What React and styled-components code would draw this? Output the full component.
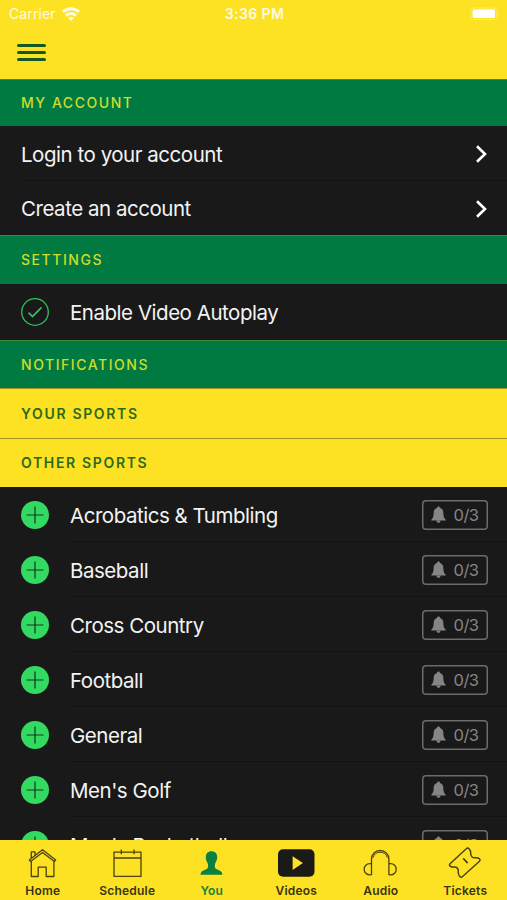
import React, { useState } from 'react';
import styled, { createGlobalStyle } from 'styled-components';

const GlobalStyle = createGlobalStyle`
	* {
		box-sizing: border-box;
	}
	body {
		margin: 0;
		background-color: #191919;
		font-family: Inter, 'Liberation Sans', sans-serif;
	}
	button {
		font: inherit;
		background: none;
		border: 0;
		padding: 0;
		cursor: pointer;
	}
`;

const Screen = styled.div`
	display: flex;
	flex-direction: column;
	width: 100%;
	height: 100vh;
	overflow: hidden;
	background-color: #191919;
`;

//Status bar and menu button
const Header = styled.header`
	flex: none;
	height: 79px;
	background-color: #fde224;
`;
const StatusBar = styled.div`
	display: grid;
	grid-template-columns: 1fr auto 1fr;
	align-items: center;
	height: 27px;
	padding: 0 7px 0 9px;
	color: #fffbe0;
	font-size: 14px;
`;
const Carrier = styled.div`
	display: flex;
	align-items: center;
	gap: 6px;
	letter-spacing: 0.1px;
`;
const Clock = styled.div`
	font-weight: 600;
	letter-spacing: 0.4px;
`;
const Battery = styled.svg`
	justify-self: end;
`;
const MenuButton = styled.button`
	display: flex;
	flex-direction: column;
	gap: 4.2px;
	margin: 17px 0 0 17px;
`;
const MenuLine = styled.span`
	width: 29px;
	height: 3px;
	border-radius: 1.5px;
	background-color: #14591f;
`;

//Scrolling list
const Content = styled.main`
	flex: 1;
	min-height: 0;
	overflow: hidden;
`;
const SectionTitle = styled.h2`
	display: flex;
	align-items: center;
	height: ${({ $height }) => $height}px;
	margin: 0;
	padding: 0 21px 1px;
	border-top: 1px solid ${({ $light }) => ($light ? '#a3941c' : '#3f8a35')};
	background-color: ${({ $light }) => ($light ? '#fde224' : '#007a40')};
	color: ${({ $light }) => ($light ? '#2b6a1c' : '#cfdc2c')};
	font-size: 14px;
	font-weight: ${({ $light }) => ($light ? 600 : 500)};
	letter-spacing: ${({ $light }) => ($light ? 1.65 : 1.55)}px;
`;
const Row = styled.div`
	display: flex;
	align-items: center;
	height: ${({ $height }) => $height || 55}px;
	padding-left: 21px;
`;
const RowBody = styled.div`
	display: flex;
	flex: 1;
	align-items: center;
	justify-content: space-between;
	height: 100%;
	padding: 2px 19px 0 0;
	border-bottom: 1px solid ${({ $last }) => ($last ? 'transparent' : '#131313')};
`;
const RowLabel = styled.span`
	color: #f3f3f3;
	font-size: 20.5px;
	letter-spacing: -0.47px;
	white-space: nowrap;
`;
const RowIcon = styled.svg`
	flex: none;
	width: 28px;
	height: 28px;
	margin-right: 21px;
`;
const AlertBadge = styled.button`
	display: flex;
	align-items: center;
	justify-content: center;
	gap: 7px;
	width: 66px;
	height: 30px;
	border-radius: 4px;
	box-shadow: inset 0 0 0 1.5px #6c6c6c;
	color: #858585;
	font-size: 16.5px;
	letter-spacing: -0.5px;
`;

//Bottom tabs
const TabBar = styled.nav`
	display: grid;
	flex: none;
	grid-template-columns: repeat(6, 1fr);
	height: 60px;
	background-color: #fde224;
`;
const Tab = styled.button`
	display: flex;
	flex-direction: column;
	align-items: center;
	padding: 7px 0 0 1px;
	color: ${({ $active }) => ($active ? '#14803a' : '#3a3410')};
	font-size: 12px;
	font-weight: 600;
	line-height: 15px;
	letter-spacing: 0.2px;

	svg {
		flex: none;
		width: 36px;
		height: 32px;
		margin: 0 1px 4px 0;
		overflow: visible;
		fill: none;
		stroke: #4b430f;
		stroke-width: 1.3;
		stroke-linejoin: round;
	}
`;

const Chevron = () => (
	<svg width="14" height="20" viewBox="0 0 14 20" fill="none" stroke="#fff" strokeWidth="2.6">
		<path d="M3 2.2l8 7.8-8 7.8" />
	</svg>
);

const Bell = () => (
	<svg width="15" height="18" viewBox="0 0 15 18" fill="#858585">
		<path d="M7.500 .6c.9 0 1.400.6 1.500 1.300 2.200.6 3.300 2.300 3.300 4.600 0 4 .7 5.600 2.400 7.200v.9H.300v-.9c1.700-1.600 2.400-3.200 2.400-7.200 0-2.300 1.100-4 3.300-4.600.1-.7.6-1.300 1.500-1.300z" />
		<path d="M5.400 14.500h4.200c-.2 1.500-1 2.300-2.100 2.300s-1.900-.8-2.100-2.300z" />
	</svg>
);

const HomeIcon = () => (
	<svg viewBox="0 0 36 32">
		<path d="M5.300 12.900L18.500 2.700l13.200 10.200-1.300 1.700L18.500 5.400 6.600 14.600z" />
		<path d="M7.300 14.500v15h6.900v-9.300h8v9.300h7.700v-15" />
		<path d="M7.300 11V4.900h3.700v3.400" />
	</svg>
);

const ScheduleIcon = () => (
	<svg viewBox="0 0 36 32">
		<path d="M5 5.100h27v24.300H5zM5 11h27M12.300 2.600v4.600M25 2.600v4.600" />
	</svg>
);

const YouIcon = () => (
	<svg viewBox="0 0 36 32">
		<path
			fill="#0b8040"
			stroke="none"
			d="M18.500 4.200c3.700 0 5.700 2.300 5.700 5.700 0 1.700-.3 2.900-.9 4.200-.6 1.500-1.300 2.600-1.500 4.300-.2 2.300.6 3.300 2.500 4 3.300 1.200 5 2.200 5.100 5.300H7.500c.1-3.100 1.800-4.100 5.100-5.300 1.900-.7 2.700-1.700 2.500-4-.2-1.700-.9-2.800-1.500-4.300-.6-1.300-.8-2.500-.8-4.200 0-3.400 2-5.700 5.700-5.700z"
		/>
	</svg>
);

const VideosIcon = () => (
	<svg viewBox="0 0 36 32">
		<rect x="0" y="2.300" width="36.500" height="27.400" rx="5" fill="#1a1a16" stroke="none" />
		<path d="M14.600 9.200v13.800l10.300-6.900z" fill="#fde224" stroke="none" />
	</svg>
);

const AudioIcon = () => (
	<svg viewBox="0 0 36 32">
		<path d="M9.500 27.900V12.200a8.700 8.700 0 0 1 17.400 0v15.700" />
		<path d="M11.100 10.600a7.400 7.400 0 0 1 14.200 0" strokeWidth="1" />
		<path d="M9.500 16.600H7.800a5.600 5.600 0 0 0 0 11.300h1.700M26.900 16.600h1.700a5.600 5.600 0 0 1 0 11.300h-1.700" />
	</svg>
);

const TicketsIcon = () => (
	<svg viewBox="0 0 36 32">
		<path
			strokeWidth="1.5"
			d="M19.300 1.800L3 16.700c-.8.8-.8 1.500-.1 2.200 1.200 1.200 2.200 1.400 3.800 1.200 3-.4 5 1.600 4.600 4.600-.2 1.800 0 3.200 1.300 4.600.9 1 1.700 1.500 2.700.5L32.500 14.200c.8-.8.8-1.500.1-2.200-1-1-2.200-1.400-4-1.200-3 .4-5.200-1.700-4.900-4.600.2-1.800-.2-2.900-1.500-4.300-1-1.100-1.900-1.100-2.900-.1z"
		/>
		<path d="M16.200 11.400l4.500 4.700" strokeWidth="1.700" />
	</svg>
);

const accountLinks = ['Login to your account', 'Create an account'];

const sports = [
	'Acrobatics & Tumbling',
	'Baseball',
	'Cross Country',
	'Football',
	'General',
	"Men's Golf",
	"Men's Basketball",
];

const tabs = [
	{ name: 'Home', Icon: HomeIcon },
	{ name: 'Schedule', Icon: ScheduleIcon },
	{ name: 'You', Icon: YouIcon },
	{ name: 'Videos', Icon: VideosIcon },
	{ name: 'Audio', Icon: AudioIcon },
	{ name: 'Tickets', Icon: TicketsIcon },
];

const App = () => {
	const [activeTab, setActiveTab] = useState('You');
	return (
		<Screen>
			<GlobalStyle />
			<Header>
				<StatusBar>
					<Carrier>
						Carrier
						<svg width="18" height="14" viewBox="0 0 18 14" fill="none" stroke="#fffbe0" strokeWidth="2.900">
							<path d="M.900 5a11.600 11.600 0 0 1 16.200 0M4 8.600a7.100 7.100 0 0 1 10 0" />
							<path d="M9 13.900l-2.800-3a3.900 3.900 0 0 1 5.600 0z" fill="#fffbe0" stroke="none" />
						</svg>
					</Carrier>
					<Clock>3:36 PM</Clock>
					<Battery width="30" height="14" viewBox="0 0 30 14">
						<rect x="0.800" y="1" width="26" height="11.500" rx="3" fill="none" stroke="#ffed5e" />
						<rect x="2.600" y="2.600" width="22.400" height="8.400" rx="1.500" fill="#fff" />
						<path d="M28.200 5v3.600c1.300-.6 1.300-3 0-3.600z" fill="#ffed5e" />
					</Battery>
				</StatusBar>
				<MenuButton aria-label="Menu">
					<MenuLine />
					<MenuLine />
					<MenuLine />
				</MenuButton>
			</Header>

			<Content>
				<SectionTitle $height={47}>MY ACCOUNT</SectionTitle>
				{accountLinks.map((label, i) => (
					<Row key={label} $height={i === 0 ? 55 : 54}>
						<RowBody $last={i === accountLinks.length - 1}>
							<RowLabel>{label}</RowLabel>
							<Chevron />
						</RowBody>
					</Row>
				))}
				<SectionTitle $height={49}>SETTINGS</SectionTitle>
				<Row $height={56}>
					<RowIcon viewBox="0 0 28 28" fill="none" stroke="#2fc45c">
						<circle cx="14" cy="14" r="13.300" strokeWidth="1.300" />
						<path d="M7.500 14.600l4 4 9-9.300" strokeWidth="1.700" />
					</RowIcon>
					<RowBody $last>
						<RowLabel>Enable Video Autoplay</RowLabel>
					</RowBody>
				</Row>
				<SectionTitle $height={48}>NOTIFICATIONS</SectionTitle>
				<SectionTitle $height={50} $light>YOUR SPORTS</SectionTitle>
				<SectionTitle $height={49} $light>OTHER SPORTS</SectionTitle>
				{sports.map((sport) => (
					<Row key={sport}>
						<RowIcon viewBox="0 0 28 28">
							<circle cx="14" cy="14" r="14" fill="#32da62" />
							<path d="M14 5.500v17M5.500 14h17" stroke="#14391f" strokeWidth="1.200" />
						</RowIcon>
						<RowBody>
							<RowLabel>{sport}</RowLabel>
							<AlertBadge>
								<Bell />
								0/3
							</AlertBadge>
						</RowBody>
					</Row>
				))}
			</Content>

			<TabBar>
				{tabs.map(({ name, Icon }) => (
					<Tab key={name} $active={name === activeTab} onClick={() => setActiveTab(name)}>
						<Icon />
						{name}
					</Tab>
				))}
			</TabBar>
		</Screen>
	);
};

export default App;
